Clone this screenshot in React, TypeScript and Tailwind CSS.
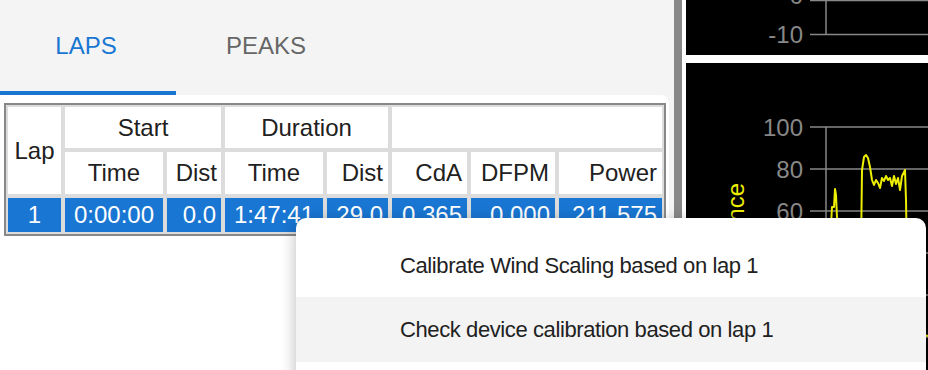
import React from 'react';

const BLUE = '#1976d2';

const cadencePoints =
  '143,237 145,162 146,144 148,144 149,126 150,132 152,177 154,267 174,267 175,187 176,107 178,94 180,92 182,95 184,104 186,117 188,122 190,117 192,120 194,125 196,115 198,118 200,113 202,117 204,115 206,123 208,113 210,121 212,115 214,127 216,113 218,109 219,107 220,137 221,197 222,267 242,273';

function Cell({
  children,
  className = '',
}: Readonly<{ children?: React.ReactNode; className?: string }>) {
  return <div className={`flex items-center bg-white ${className}`}>{children}</div>;
}

function DataCell({
  children,
  right,
}: Readonly<{ children: React.ReactNode; right?: boolean }>) {
  return (
    <div
      className={`flex items-center bg-[#1976d2] text-white ${
        right ? 'justify-end pr-[5px]' : 'justify-center'
      }`}
    >
      {children}
    </div>
  );
}

function LapsTable() {
  return (
    <div className="w-[662px] border-2 border-[#888] bg-[#dcdcdc] p-[2px]">
      <div className="grid grid-cols-[53px_98px_54px_98px_61px_75px_84px_103px] grid-rows-[41px_42px_34px] gap-[4px] text-[24px] leading-none text-[#212121]">
        <Cell className="row-span-2 justify-center">Lap</Cell>
        <Cell className="col-span-2 justify-center">Start</Cell>
        <Cell className="col-span-2 justify-center">Duration</Cell>
        <Cell className="col-span-3" />

        <Cell className="justify-center">Time</Cell>
        <Cell className="justify-end pr-[4px]">Dist</Cell>
        <Cell className="justify-center">Time</Cell>
        <Cell className="justify-end pr-[5px]">Dist</Cell>
        <Cell className="justify-end pr-[5px]">CdA</Cell>
        <Cell className="justify-end pr-[6px]">DFPM</Cell>
        <Cell className="justify-end pr-[5px]">Power</Cell>

        <DataCell>1</DataCell>
        <DataCell>0:00:00</DataCell>
        <DataCell right>0.0</DataCell>
        <DataCell>1:47:41</DataCell>
        <DataCell right>29.0</DataCell>
        <DataCell right>0.365</DataCell>
        <DataCell right>0.000</DataCell>
        <DataCell right>211.575</DataCell>
      </div>
    </div>
  );
}

function TopChart() {
  return (
    <svg width="242" height="55" className="block" fontFamily="'Liberation Sans', Arial, sans-serif">
      <line x1="124" y1="0.5" x2="242" y2="0.5" stroke="#888" strokeWidth="1.5" />
      <line x1="124" y1="34.5" x2="242" y2="34.5" stroke="#888" strokeWidth="1.5" />
      <line x1="140" y1="0" x2="140" y2="35" stroke="#888" strokeWidth="1.5" />
      <text x="117" y="4" textAnchor="end" fontSize="24" fill="#888">0</text>
      <text x="117" y="43" textAnchor="end" fontSize="24" fill="#888">-10</text>
    </svg>
  );
}

function BottomChart() {
  const ticks = [
    { y: 64, label: '100' },
    { y: 106, label: '80' },
    { y: 148, label: '60' },
    { y: 190, label: '40' },
    { y: 232, label: '20' },
    { y: 274, label: '0' },
  ];
  return (
    <svg width="242" height="307" className="block" fontFamily="'Liberation Sans', Arial, sans-serif">
      {ticks.map((t) => (
        <g key={t.label}>
          <line x1="124" y1={t.y} x2="242" y2={t.y} stroke="#888" strokeWidth="1.5" />
          <text x="117" y={t.y + 8.5} textAnchor="end" fontSize="24" fill="#888">
            {t.label}
          </text>
        </g>
      ))}
      <line x1="140" y1="64" x2="140" y2="274" stroke="#888" strokeWidth="1.5" />
      <text
        x="0"
        y="0"
        transform="translate(58 120) rotate(-90)"
        textAnchor="end"
        fontSize="24"
        fill="#eeee00"
      >
        Cadence
      </text>
      <polyline points={cadencePoints} fill="none" stroke="#eeee00" strokeWidth="2" strokeLinejoin="round" />
    </svg>
  );
}

export default function App() {
  return (
    <div className="relative flex h-[370px] w-[928px] overflow-hidden bg-white font-['Liberation_Sans',Arial,sans-serif]">
      {/* Left panel */}
      <div className="flex w-[674px] flex-col bg-[#f4f4f4]">
        <div className="flex h-[95px] text-[24px]">
          <div className="flex w-[176px] flex-col">
            <div className="flex flex-1 items-center justify-center pr-[4px]" style={{ color: BLUE }}>
              LAPS
            </div>
            <div className="h-[4px] bg-[#1976d2]" />
          </div>
          <div className="flex w-[180px] flex-col">
            <div className="flex flex-1 items-center justify-center text-[#666]">PEAKS</div>
            <div className="h-[4px]" />
          </div>
        </div>
        <div className="w-[669px] flex-1 rounded-tr-[8px] bg-white pl-[4px] pt-[8px]">
          <LapsTable />
        </div>
      </div>

      {/* Splitter */}
      <div className="w-[8px] bg-[#888]" />

      {/* Charts */}
      <div className="ml-[4px] flex w-[242px] flex-col gap-[8px]">
        <div className="h-[55px] bg-black">
          <TopChart />
        </div>
        <div className="flex-1 bg-black">
          <BottomChart />
        </div>
      </div>

      {/* Context menu */}
      <div className="absolute left-[296px] top-[218px] h-[180px] w-[630px] rounded-[10px] bg-white pt-[15px] text-[22px] tracking-[-0.4px] text-[#212121] shadow-[0_4px_16px_rgba(0,0,0,0.28)]">
        <div className="flex h-[64px] items-center pl-[104px]">Calibrate Wind Scaling based on lap 1</div>
        <div className="flex h-[65px] items-center bg-[#f3f3f3] pl-[104px]">
          Check device calibration based on lap 1
        </div>
        <div className="flex h-[64px] items-center pl-[104px]" />
      </div>
    </div>
  );
}
